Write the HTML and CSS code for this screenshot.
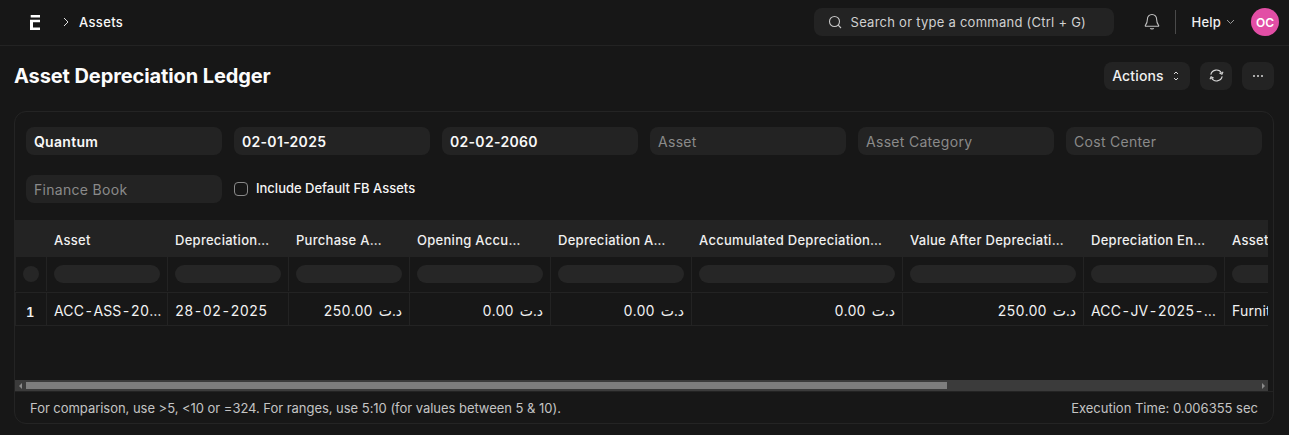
FILE: index.html
```html
<!DOCTYPE html>
<html lang="en">
<head>
<meta charset="utf-8">
<title>Asset Depreciation Ledger</title>
<link rel="stylesheet" href="styles.css">
</head>
<body>
<header class="navbar">
  <svg class="logo" width="10" height="15" viewBox="0 0 10 15"><path fill="#fff" d="M.7 0H10v2.500H.7zM0 4.700h10v2.500H3v5.300h7V15H0z"/></svg>
  <svg class="crumb-icon" width="8" height="10" viewBox="0 0 8 10"><path d="M2 1l4 4-4 4" fill="none" stroke="#e0e0e0" stroke-width="1"/></svg>
  <span class="crumb">Assets</span>
  <div class="nav-right">
    <div class="search">
      <svg width="14" height="14" viewBox="0 0 14 14"><circle cx="6.500" cy="6.500" r="5" fill="none" stroke="#c8c8c8" stroke-width="1.100"/><path d="M10.200 10.200l2.800 2.800" stroke="#c8c8c8" stroke-width="1.100"/></svg>
      <span>Search or type a command (Ctrl + G)</span>
    </div>
    <svg class="bell" width="16" height="18" viewBox="0 0 16 18"><path d="M8 1.500c-2.900 0-4.600 2.100-4.600 4.800 0 3.600-1.200 5-2.100 6.200-.2.300 0 .7.400.7h12.600c.4 0 .6-.4.400-.7-.9-1.200-2.100-2.600-2.100-6.200C12.600 3.600 10.900 1.500 8 1.500z" fill="none" stroke="#c0c0c0" stroke-width="1.100"/><path d="M6.300 15.300c.4.800 3 .8 3.400 0" fill="none" stroke="#c0c0c0" stroke-width="1.100"/></svg>
    <div class="divider"></div>
    <span class="help">Help</span>
    <svg class="help-caret" width="9" height="6" viewBox="0 0 9 6"><path d="M1 1l3.500 3.500L8 1" fill="none" stroke="#9a9a9a"/></svg>
    <div class="avatar">OC</div>
  </div>
</header>

<section class="page-head">
  <h1>Asset Depreciation Ledger</h1>
  <div class="actions">
    <button class="btn btn-actions">Actions
      <svg width="6" height="12" viewBox="0 0 6 12"><path d="M1 4l2-2 2 2M1 8l2 2 2-2" fill="none" stroke="#d8d8d8"/></svg>
    </button>
    <button class="btn btn-icon"><svg width="15" height="13" viewBox="0 0 15 13"><path d="M1.800 5.600A5.800 5.800 0 0 1 12.600 4.200M13.200 7.400A5.800 5.800 0 0 1 2.400 8.800" fill="none" stroke="#d8d8d8" stroke-width="1.100"/><path d="M10.400 4.100l2.500 1.200L14 2.800M4.600 8.900L2.100 7.700 1 10.200" fill="none" stroke="#d8d8d8" stroke-width="1.100"/></svg></button>
    <button class="btn btn-icon"><svg width="10" height="2" viewBox="0 0 10 2"><circle cx="1" cy="1" r="1" fill="#d8d8d8"/><circle cx="5" cy="1" r="1" fill="#d8d8d8"/><circle cx="9" cy="1" r="1" fill="#d8d8d8"/></svg></button>
  </div>
</section>

<main class="card">
  <div class="filters">
    <div class="field val">Quantum</div>
    <div class="field val">02-01-2025</div>
    <div class="field val">02-02-2060</div>
    <div class="field">Asset</div>
    <div class="field">Asset Category</div>
    <div class="field">Cost Center</div>
    <div class="field">Finance Book</div>
    <label class="check"><span class="box"></span>Include Default FB Assets</label>
  </div>

  <div class="table-wrap">
    <div class="table">
      <div class="row head">
        <div class="cell c0"></div>
        <div class="cell c1">Asset</div>
        <div class="cell c2">Depreciation…</div>
        <div class="cell c3">Purchase A…</div>
        <div class="cell c4">Opening Accu…</div>
        <div class="cell c5">Depreciation A…</div>
        <div class="cell c6">Accumulated Depreciation…</div>
        <div class="cell c7">Value After Depreciati…</div>
        <div class="cell c8">Depreciation En…</div>
        <div class="cell c9">Asset Category</div>
      </div>
      <div class="row filter-row">
        <div class="cell c0"><span class="dot"></span></div>
        <div class="cell c1"><span class="pill"></span></div>
        <div class="cell c2"><span class="pill"></span></div>
        <div class="cell c3"><span class="pill"></span></div>
        <div class="cell c4"><span class="pill"></span></div>
        <div class="cell c5"><span class="pill"></span></div>
        <div class="cell c6"><span class="pill"></span></div>
        <div class="cell c7"><span class="pill"></span></div>
        <div class="cell c8"><span class="pill"></span></div>
        <div class="cell c9"><span class="pill"></span></div>
      </div>
      <div class="row data">
        <div class="cell c0 num">1</div>
        <div class="cell c1">ACC-ASS-20…</div>
        <div class="cell c2">28-02-2025</div>
        <div class="cell c3 right">250.00 د.ت</div>
        <div class="cell c4 right">0.00 د.ت</div>
        <div class="cell c5 right">0.00 د.ت</div>
        <div class="cell c6 right">0.00 د.ت</div>
        <div class="cell c7 right">250.00 د.ت</div>
        <div class="cell c8">ACC-JV-2025-…</div>
        <div class="cell c9">Furniture</div>
      </div>
    </div>
    <div class="scrollbar">
      <span class="arrow-left"></span>
      <div class="track"><div class="thumb"></div></div>
      <span class="arrow-right"></span>
    </div>
  </div>

  <footer class="foot">
    <span class="hint">For comparison, use &gt;5, &lt;10 or =324. For ranges, use 5:10 (for values between 5 &amp; 10).</span>
    <span>Execution Time: 0.006355 sec</span>
  </footer>
</main>
</body>
</html>
```

FILE: styles.css
```css
* { box-sizing: border-box; }
html, body { margin: 0; padding: 0; height: 435px; overflow: hidden; }
body { background: #171717; color: #f8f8f8; font-family: Inter, "DejaVu Sans", sans-serif; font-size: 13px; }

.navbar { height: 46px; border-bottom: 1px solid #232323; display: flex; align-items: center; padding: 0 10px 1px 30px; }
.logo { margin-right: 22px; }
.crumb-icon { margin-right: 9px; }
.crumb { font-weight: 500; font-size: 13px; letter-spacing: .35px; color: #f8f8f8; }
.nav-right { margin-left: auto; display: flex; align-items: center; }
.search { width: 300px; height: 28px; background: #232323; border-radius: 8px; display: flex; align-items: center; gap: 9px; padding-left: 14px; color: #d0d0d0; font-size: 13px; letter-spacing: .25px; margin-right: 30px; }
.bell { margin-right: 15px; }
.divider { width: 1px; height: 24px; background: #4a4a4a; margin-right: 16px; }
.help { font-weight: 500; color: #f0f0f0; margin-right: 5px; letter-spacing: .2px; }
.help-caret { margin-right: 16px; }
.avatar { width: 28px; height: 28px; border-radius: 50%; background: #e24ea5; color: #fff; font-size: 12px; font-weight: 600; display: flex; align-items: center; justify-content: center; }

.page-head { height: 65px; display: flex; align-items: center; justify-content: space-between; padding: 0 15px 6px 14px; }
h1 { margin: 0; font-size: 20px; font-weight: 700; color: #fcfcfc; letter-spacing: -.1px; }
.actions { display: flex; gap: 10px; }
.btn { height: 28px; border: 0; border-radius: 8px; background: #232323; color: #f0f0f0; font: 500 14px Inter, sans-serif; letter-spacing: .15px; display: flex; align-items: center; justify-content: center; padding: 0; }
.btn-actions { width: 86px; gap: 9px; padding-right: 3px; }
.btn-icon { width: 32px; }

.card { margin: 0 15px 0 14px; height: 313px; border: 1px solid #242424; border-radius: 12px; overflow: hidden; display: flex; flex-direction: column; }
.filters { height: 108px; padding: 15px 11px 0; display: grid; grid-template-columns: repeat(6, 196px); column-gap: 12px; row-gap: 20px; grid-auto-rows: 28px; flex: none; }
.field { background: #232323; border-radius: 8px; display: flex; align-items: center; padding-left: 8px; color: #8a8a8a; font-size: 14px; letter-spacing: .3px; }
.field.val { color: #f8f8f8; font-weight: 600; font-size: 14px; }
.check { display: flex; align-items: center; gap: 8px; font-size: 13px; font-weight: 500; color: #f4f4f4; padding-bottom: 2px; }
.box { width: 14px; height: 14px; border: 1px solid #8a8a8a; border-radius: 4px; flex: none; margin-top: 2px; }

.table-wrap { flex: 1; height: 171px; display: flex; flex-direction: column; min-height: 0; padding-right: 5px; }
.table { height: 160px; overflow: hidden; flex: none; }
.row { display: flex; width: max-content; }
.cell { flex: none; white-space: nowrap; overflow: hidden; padding: 0 7px; display: flex; align-items: center; border-right: 1px solid #232323; }
.c0 { width: 32px; } .c1, .c2, .c3 { width: 121px; } .c4, .c5 { width: 141px; } .c6 { width: 211px; } .c7 { width: 181px; } .c8 { width: 141px; } .c9 { width: 120px; }
.filter-row .c0, .data .c0 { border-left: 1px solid #232323; }

.head { height: 37px; background: #232323; }
.head .cell { border-right: 0; font-weight: 500; font-size: 13px; letter-spacing: .28px; color: #f0f0f0; padding-top: 2px; }
.filter-row { height: 36px; border-bottom: 1px solid #232323; }
.filter-row .cell { margin-bottom: 1px; }
.pill { display: block; width: 100%; height: 18px; border-radius: 9px; background: #262626; }
.dot { display: block; width: 16px; height: 16px; border-radius: 50%; background: #262626; }
.data { height: 33px; border-bottom: 1px solid #232323; font-size: 14px; color: #f2f2f2; letter-spacing: .17px; font-variant-numeric: tabular-nums; }
.data .cell { padding-top: 2px; }
.right { justify-content: flex-end; word-spacing: 2.500px; }
.num { padding: 5px 0 0 10px !important; font-size: 13px; font-weight: 600; }

.scrollbar { height: 11px; background: #3b3b3b; display: flex; align-items: center; flex: none; }
.track { flex: 1; height: 7px; margin: 0 10px 0 4px; }
.thumb { width: 921px; height: 7px; background: #7d7d7d; }
.arrow-left { width: 0; height: 0; margin-left: 4px; border: 3px solid transparent; border-left-width: 0; border-right: 3px solid #8a8a8a; }
.arrow-right { width: 0; height: 0; margin-right: 3px; border: 3px solid transparent; border-right-width: 0; border-left: 3px solid #8a8a8a; }

.foot { flex: none; height: 32px; border-top: 1px solid #232323; display: flex; justify-content: space-between; align-items: center; padding: 0 15px; font-size: 13px; color: #c4c4c4; }
.hint { letter-spacing: -.035px; }
```
